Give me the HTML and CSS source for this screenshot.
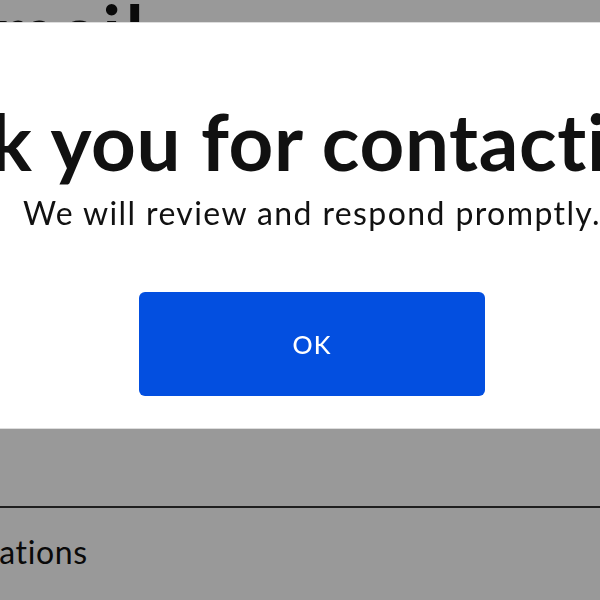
FILE: index.html
```html
<!DOCTYPE html>
<html lang="en">
<head>
    <meta charset="UTF-8">
    <meta name="viewport" content="width=device-width, initial-scale=1.0">
    <title>Contact settings</title>
    <link rel="stylesheet" href="styles.css">
</head>
<body>
    <!-- Страница под модальным окном -->
    <div class="page">
        <h1 class="page-title">Email</h1>
        <div class="row">Notifications</div>
    </div>

    <!-- Затемнение и окно подтверждения -->
    <div class="overlay"></div>
    <div class="modal">
        <div class="modal-body">
            <h2 class="modal-title">Thank you for contacting us!</h2>
            <p class="modal-text">We will review and respond promptly.</p>
            <button class="ok-button">OK</button>
        </div>
    </div>
</body>
</html>
```

FILE: styles.css
```css
/* Основные стили */
html, body {
    margin: 0;
    width: 600px;
    height: 600px;
    overflow: hidden;
}
body {
    font-family: Lato, "Liberation Sans", sans-serif;
    color: #111;
    background-color: #fff;
}

/* Страница на фоне */
.page {
    margin-left: -100px;
}
.page-title {
    margin: 0;
    font-size: 72px;
    font-weight: 700;
    line-height: 60px;
    letter-spacing: 5px;
    text-indent: 50px;
    height: 508px;
    border-bottom: 2px solid #333;
    box-sizing: border-box;
}
.row {
    font-size: 32px;
    letter-spacing: 0.6px;
    padding-top: 24px;
}

/* Модальное окно */
.overlay {
    position: fixed;
    inset: 0;
    background-color: rgba(0, 0, 0, 0.4);
}
.modal {
    position: fixed;
    top: 23px;
    left: 0;
    right: 0;
    height: 405px;
    background-color: #fff;
    box-shadow: 0 0 0 1px #ddd;
    overflow: hidden;
}
.modal-body {
    display: flex;
    flex-direction: column;
    align-items: center;
    padding: 78px 0 0 24px;
}
.modal-title {
    margin: 0 0 0 6px;
    font-size: 78px;
    font-weight: 700;
    line-height: 80px;
    letter-spacing: 0.7px;
    white-space: nowrap;
}
.modal-text {
    margin: 12px 0 0;
    font-size: 32px;
    line-height: 40px;
    letter-spacing: 1.4px;
    white-space: nowrap;
}
.ok-button {
    margin-top: 59px;
    width: 346px;
    height: 104px;
    border: none;
    border-radius: 6px;
    background-color: #034fe0;
    color: #fff;
    font-family: inherit;
    font-size: 25px;
    font-weight: 500;
    letter-spacing: 1px;
    cursor: pointer;
}
```
